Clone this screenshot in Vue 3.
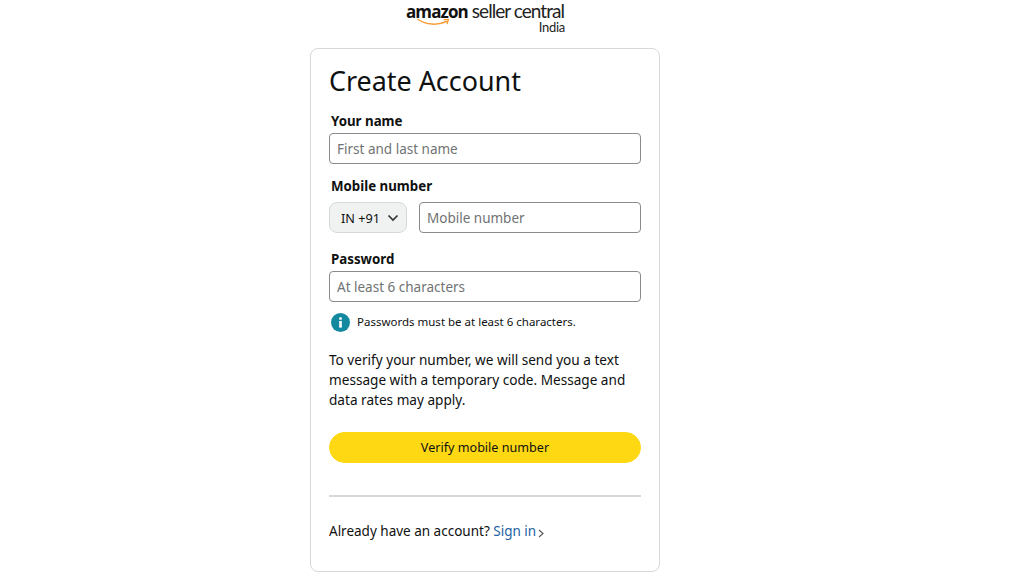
<script setup>
const title = 'Create Account'
</script>

<template>
  <div class="page">
    <header class="logo">
      <div class="logo-line">
        <span class="logo-amazon">amazon</span>
        <span class="logo-seller">seller central</span>
        <svg class="smile" width="34" height="9" viewBox="0 0 34 9">
          <path d="M1 1.5C9 7 21 7.5 29.5 3.5" fill="none" stroke="#f79c34" stroke-width="1.5" stroke-linecap="round" />
          <path d="M26.5 1.6L31.5 1.4L30 6" fill="none" stroke="#f79c34" stroke-width="1.3" />
        </svg>
      </div>
      <div class="logo-india">India</div>
    </header>

    <main class="card">
      <h1>{{ title }}</h1>

      <label class="label first">Your name</label>
      <input class="field" placeholder="First and last name" />

      <label class="label mobile">Mobile number</label>
      <div class="phone-row">
        <button class="country" type="button">
          <span>IN +91</span>
          <svg width="12" height="8" viewBox="0 0 12 8">
            <path d="M1.5 1.5L6 6L10.5 1.5" fill="none" stroke="#333" stroke-width="1.7" />
          </svg>
        </button>
        <input class="field phone" placeholder="Mobile number" />
      </div>

      <label class="label password">Password</label>
      <input class="field" placeholder="At least 6 characters" />

      <div class="hint">
        <svg width="19" height="19" viewBox="0 0 20 20">
          <circle cx="10" cy="10" r="10" fill="#12899f" />
          <rect x="8.6" y="8.4" width="2.8" height="7" fill="#fff" />
          <rect x="8.6" y="4.5" width="2.8" height="2.7" rx="1" fill="#fff" />
        </svg>
        <span>Passwords must be at least 6 characters.</span>
      </div>

      <p class="notice">To verify your number, we will send you a text message with a temporary code. Message and data rates may apply.</p>

      <button class="submit" type="button">Verify mobile number</button>

      <hr class="divider" />

      <p class="signin">
        Already have an account?
        <a href="#">Sign in</a>
        <svg class="chev" width="6" height="9" viewBox="0 0 6 9">
          <path d="M1 1L5 4.5L1 8" fill="none" stroke="#555" stroke-width="1.1" />
        </svg>
      </p>
    </main>
  </div>
</template>

<style>
html, body { margin: 0; background: #fff; }
</style>

<style scoped>
.page {
  box-sizing: border-box;
  width: 1011px;
  height: 581px;
  padding-right: 41px;
  overflow: hidden;
  display: flex;
  flex-direction: column;
  align-items: center;
  font-family: "Noto Sans", sans-serif;
  font-size: 14px;
  color: #0f1111;
}
.logo {
  height: 48px;
  width: 159px;
  margin-left: 1px;
  box-sizing: border-box;
  line-height: 1;
}
.logo-line {
  position: relative;
  display: flex;
  align-items: baseline;
  gap: 4px;
  height: 16px;
  padding-top: 3px;
  white-space: nowrap;
}
.logo-amazon {
  font-family: "Open Sans", sans-serif;
  font-weight: 700;
  font-size: 17px;
  line-height: 16px;
  letter-spacing: -0.9px;
  color: #111;
}
.logo-seller {
  font-family: Lato, sans-serif;
  font-size: 19px;
  line-height: 16px;
  letter-spacing: -0.95px;
  color: #222;
}
.smile {
  position: absolute;
  left: 11px;
  top: 18px;
}
.logo-india {
  text-align: right;
  font-family: Lato, sans-serif;
  font-size: 13px;
  line-height: 12px;
  letter-spacing: -0.3px;
  color: #222;
  margin-top: 2px;
}
.card {
  box-sizing: border-box;
  width: 350px;
  height: 524px;
  border: 1px solid #d5d9d9;
  border-radius: 8px;
  padding: 14px 18px 0;
  display: flex;
  flex-direction: column;
}
h1 {
  margin: 0;
  font-size: 26.9px;
  font-weight: 400;
  line-height: 36px;
}
.label {
  font-size: 13.3px;
  font-weight: 700;
  line-height: 20px;
  margin-left: 2px;
}
.label.first { margin-top: 12px; margin-bottom: 2px; }
.label.mobile { margin-top: 12px; margin-bottom: 6px; }
.label.password { margin-top: 16px; margin-bottom: 2px; }
.field {
  box-sizing: border-box;
  width: 100%;
  height: 31px;
  border: 1px solid #888c8c;
  border-radius: 4px;
  padding: 0 7px;
  font: 13.5px "Noto Sans", sans-serif;
  color: #0f1111;
  outline: none;
  background: #fff;
}
.field::placeholder { color: #6f7373; opacity: 1; }
.phone-row { display: flex; gap: 12px; }
.phone { flex: 1; min-width: 0; width: auto; }
.country {
  box-sizing: border-box;
  width: 78px;
  height: 31px;
  border: 1px solid #d5d9d9;
  border-radius: 8px;
  background: #f0f2f2;
  display: flex;
  align-items: center;
  justify-content: space-between;
  padding: 0 7px 0 11px;
  font: 12.7px "Noto Sans", sans-serif;
  color: #0f1111;
}
.hint {
  display: flex;
  align-items: center;
  gap: 7px;
  margin-top: 10px;
  margin-left: 2px;
  font-size: 11.5px;
  line-height: 20px;
  height: 20px;
}
.notice {
  margin: 18px 0 0;
  line-height: 20px;
  font-size: 13.6px;
}
.submit {
  box-sizing: border-box;
  margin-top: 22px;
  height: 31px;
  width: 100%;
  border: 1px solid #ffd814;
  border-radius: 16px;
  background: #ffd814;
  font: 12.6px "Noto Sans", sans-serif;
  color: #0f1111;
  padding: 0;
}
.divider {
  width: 100%;
  margin: 32px 0 0;
  border: 0;
  height: 2px;
  background: #d5d9d9;
}
.signin {
  margin: 24px 0 0;
  line-height: 20px;
  font-size: 13.5px;
}
.signin a { color: #2162a1; text-decoration: none; }
.chev { margin-left: 2px; vertical-align: -2px; }
</style>
